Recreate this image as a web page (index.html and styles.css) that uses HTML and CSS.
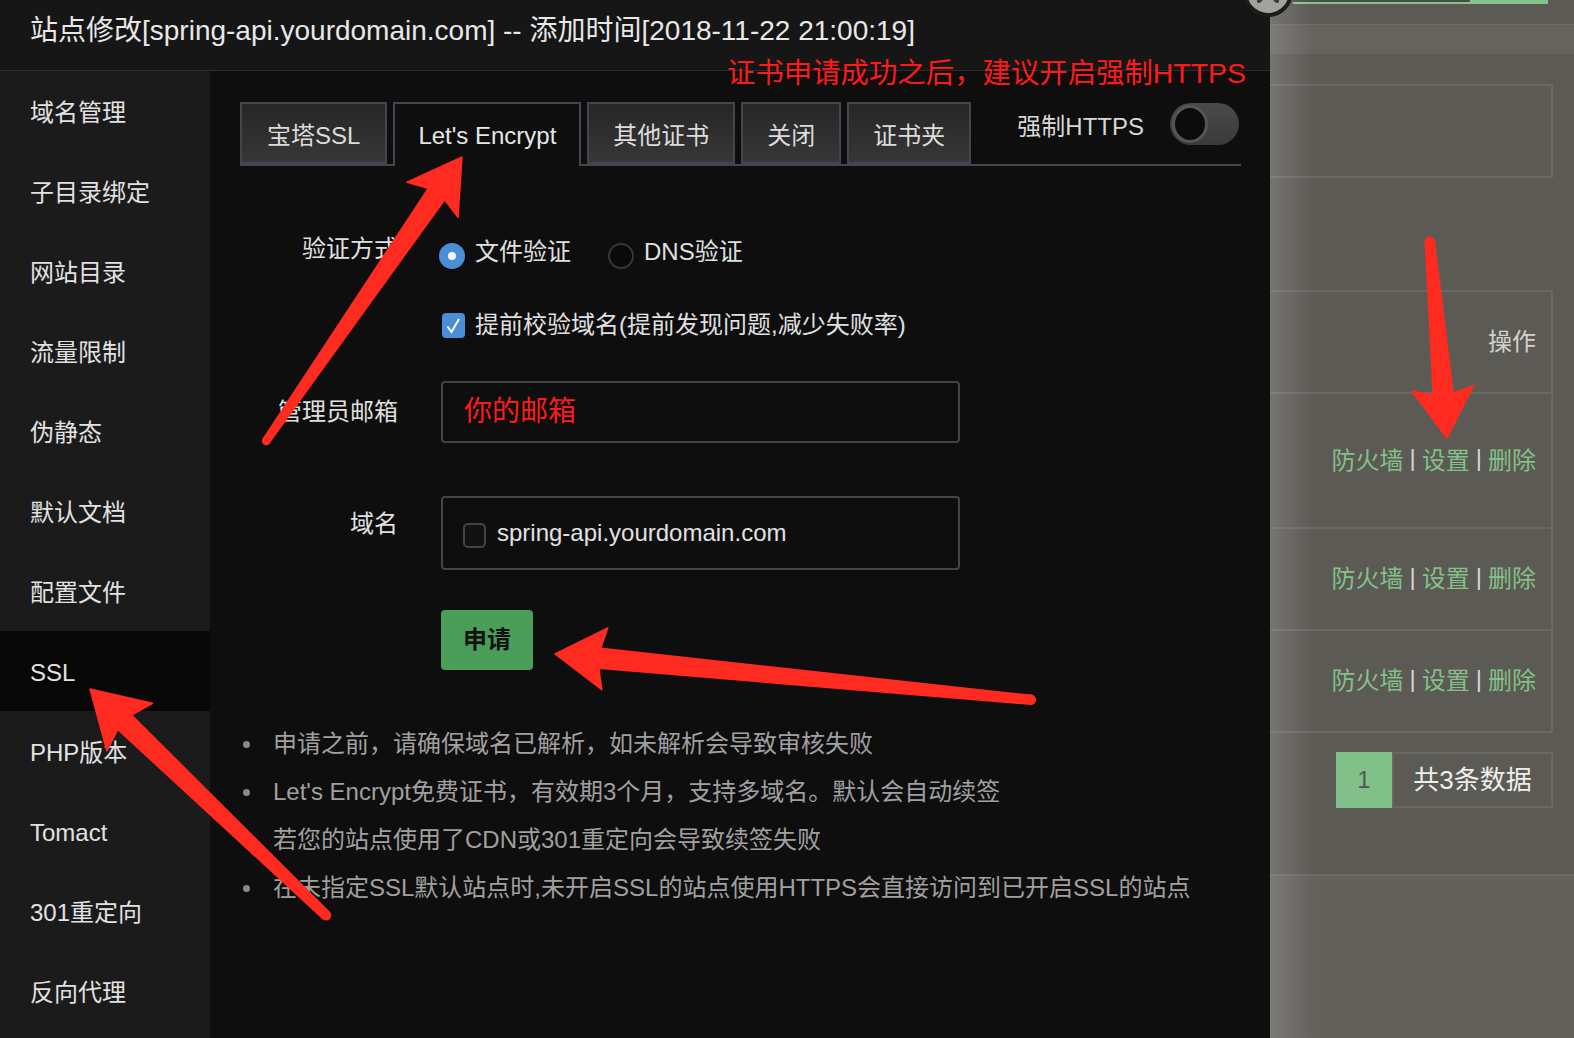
FILE: index.html
```html
<!DOCTYPE html>
<html lang="zh-CN">
<head>
<meta charset="utf-8">
<title>站点修改</title>
<link rel="stylesheet" href="styles.css">
</head>
<body>
<div class="page">
  <div class="modal">
    <div class="modal-title">站点修改[spring-api.yourdomain.com] -- 添加时间[2018-11-22 21:00:19]</div>
    <div class="modal-body">
      <ul class="side">
        <li>域名管理</li>
        <li>子目录绑定</li>
        <li>网站目录</li>
        <li>流量限制</li>
        <li>伪静态</li>
        <li>默认文档</li>
        <li>配置文件</li>
        <li class="active">SSL</li>
        <li>PHP版本</li>
        <li>Tomact</li>
        <li>301重定向</li>
        <li>反向代理</li>
      </ul>
      <div class="main">
        <div class="tabbar">
          <div class="tabs">
            <div class="tab">宝塔SSL</div>
            <div class="tab active">Let's Encrypt</div>
            <div class="tab">其他证书</div>
            <div class="tab">关闭</div>
            <div class="tab">证书夹</div>
          </div>
          <div class="force">
            <span>强制HTTPS</span>
            <span class="switch"><span class="knob"></span></span>
          </div>
        </div>

        <div class="row row-verify">
          <div class="label">验证方式</div>
          <div class="ctrl">
            <span class="radio on"><span class="dot"></span>文件验证</span>
            <span class="radio"><span class="dot"></span>DNS验证</span>
          </div>
        </div>

        <div class="row row-check">
          <div class="label"></div>
          <div class="ctrl">
            <span class="check on"><svg viewBox="0 0 23 25" width="23" height="25"><path d="M5.5 13.5 L9.5 19 L17 6" fill="none" stroke="#fff" stroke-width="2"/></svg></span>
            <span class="check-text">提前校验域名(提前发现问题,减少失败率)</span>
          </div>
        </div>

        <div class="row row-email">
          <div class="label">管理员邮箱</div>
          <div class="input email">你的邮箱</div>
        </div>

        <div class="row row-domain">
          <div class="label">域名</div>
          <div class="input domain"><span class="check off"></span><span class="domain-text">spring-api.yourdomain.com</span></div>
        </div>

        <div class="row row-btn">
          <div class="label"></div>
          <div class="btn">申请</div>
        </div>

        <ul class="tips">
          <li>申请之前，请确保域名已解析，如未解析会导致审核失败</li>
          <li>Let's Encrypt免费证书，有效期3个月，支持多域名。默认会自动续签</li>
          <li class="nobullet">若您的站点使用了CDN或301重定向会导致续签失败</li>
          <li>在未指定SSL默认站点时,未开启SSL的站点使用HTTPS会直接访问到已开启SSL的站点</li>
        </ul>
      </div>
    </div>
  </div>

  <div class="bg">
    <div class="topstrip"><div class="progress"><div class="progress-dark"></div></div></div>
    <div class="band"></div>
    <div class="box"></div>
    <div class="table">
      <div class="tr th">操作</div>
      <div class="tr tall"><span class="lk">防火墙</span><span class="sep">|</span><span class="lk">设置</span><span class="sep">|</span><span class="lk">删除</span></div>
      <div class="tr"><span class="lk">防火墙</span><span class="sep">|</span><span class="lk">设置</span><span class="sep">|</span><span class="lk">删除</span></div>
      <div class="tr"><span class="lk">防火墙</span><span class="sep">|</span><span class="lk">设置</span><span class="sep">|</span><span class="lk">删除</span></div>
    </div>
    <div class="pager"><span class="num">1</span><span class="total">共3条数据</span></div>
    <div class="foot"></div>
  </div>
</div>

<div class="close"><svg width="42" height="42" viewBox="0 0 42 42"><path d="M12 12 L30 30 M30 12 L12 30" stroke="#3a3a3a" stroke-width="4" stroke-linecap="round"/></svg></div>
<div class="note">证书申请成功之后，建议开启强制HTTPS</div>

<svg class="arrows" width="1574" height="1038" viewBox="0 0 1574 1038">
  <g fill="#ff2a20" stroke="#ff2a20" stroke-width="1.5" stroke-linejoin="round">
    <g transform="translate(462 157) rotate(-55.4)">
      <polygon points="0,0 -52,-31 -45,-10 -345,-3.5 -345,3.5 -45,10 -52,31"/>
      <circle cx="-345" cy="0" r="3.5"/>
    </g>
    <g transform="translate(1447 438) rotate(85)">
      <polygon points="0,0 -50,-31 -44,-10 -197,-4.5 -197,4.5 -44,10 -50,31"/>
      <circle cx="-197" cy="0" r="4.5"/>
    </g>
    <g transform="translate(555 654) rotate(185.5)">
      <polygon points="0,0 -50,-31 -45,-10 -478,-4.5 -478,4.5 -45,10 -50,31"/>
      <circle cx="-478" cy="0" r="4.5"/>
    </g>
    <g transform="translate(90 689) rotate(-136.2)">
      <polygon points="0,0 -55,-33 -48,-10 -327,-4.5 -327,4.5 -48,10 -55,33"/>
      <circle cx="-327" cy="0" r="4.5"/>
    </g>
  </g>
</svg>
</body>
</html>
```

FILE: styles.css
```css
* { box-sizing: border-box; }

html, body {
  margin: 0;
  padding: 0;
}

body {
  width: 1574px;
  height: 1038px;
  overflow: hidden;
  position: relative;
  background: #0e0e0e;
  font-family: "Liberation Sans", "Noto Sans CJK SC", sans-serif;
  color: #e0e0e0;
}

.page {
  display: flex;
  height: 1038px;
}

/* ---------- modal ---------- */
.modal {
  width: 1270px;
  flex: none;
  display: flex;
  flex-direction: column;
  background: #0e0e0e;
}

.modal-title {
  height: 71px;
  flex: none;
  padding-left: 30px;
  line-height: 62px;
  font-size: 28px;
  color: #e8e8e8;
  background: #161616;
  border-bottom: 1px solid #2b2b2b;
  white-space: nowrap;
}

.modal-body {
  flex: 1;
  display: flex;
}

.side {
  width: 210px;
  flex: none;
  margin: 0;
  padding: 0;
  list-style: none;
  background: #1b1b1b;
}

.side li {
  height: 80px;
  line-height: 83px;
  padding-left: 30px;
  font-size: 24px;
  color: #e2e2e2;
}

.side li.active {
  background: #080808;
}

.main {
  flex: 1;
  padding: 31px 29px 0 30px;
}

/* ---------- tabs ---------- */
.tabbar {
  height: 64px;
  display: flex;
  justify-content: space-between;
  border-bottom: 2px solid #45454f;
}

.tabs {
  display: flex;
  gap: 6px;
  align-items: flex-start;
}

.tab {
  height: 62px;
  padding: 0 24px;
  border: 2px solid #45454f;
  background: linear-gradient(#262626, #373737);
  font-size: 24px;
  line-height: 63px;
  color: #dcdcdc;
  white-space: nowrap;
}

.tab:first-child { padding: 0 25px; }

.tab.active {
  height: 64px;
  border-bottom: none;
  background: #0e0e0e;
  padding: 0 23px;
  color: #e6e6e6;
}

.force {
  display: flex;
  align-items: center;
  gap: 26px;
  height: 42px;
  margin-top: 1px;
  margin-right: 2px;
  font-size: 24px;
  color: #d8d8d8;
}

.switch {
  width: 69px;
  height: 42px;
  border-radius: 21px;
  background: linear-gradient(#4a4a4a, #3a3a3a);
  display: flex;
  align-items: center;
  padding-left: 2px;
}

.knob {
  width: 36px;
  height: 38px;
  border-radius: 50%;
  background: #0c0c0c;
  border: 3px solid #555;
}

/* ---------- form ---------- */
.row {
  display: flex;
  align-items: center;
}

.label {
  width: 158px;
  flex: none;
  margin-right: 43px;
  text-align: right;
  font-size: 24px;
  line-height: 40px;
  color: #e0e0e0;
  white-space: nowrap;
}

.ctrl {
  display: flex;
  align-items: center;
  font-size: 24px;
  color: #e0e0e0;
}

.row-verify {
  margin-top: 63px;
  height: 40px;
}

.row-verify .label { margin-right: 41px; }

.radio {
  display: inline-flex;
  align-items: center;
  gap: 10px;
  margin-right: 37px;
  white-space: nowrap;
}

.radio .dot {
  width: 26px;
  height: 26px;
  border-radius: 50%;
  margin-top: 13px;
  background: #0a0a0a;
  border: 2px solid #363636;
  display: flex;
  align-items: center;
  justify-content: center;
}

.radio.on .dot {
  background: #4a8ed6;
  border-color: #4a8ed6;
}

.radio.on .dot::after {
  content: "";
  width: 8px;
  height: 8px;
  border-radius: 50%;
  background: #f4f4f4;
}

.row-check {
  margin-top: 33px;
  height: 40px;
}

.check {
  width: 23px;
  height: 25px;
  border-radius: 4px;
  flex: none;
}

.check.on {
  background: #4a8ed6;
  margin-left: 1px;
  margin-top: 6px;
}

.check svg { display: block; }

.check-text {
  margin-left: 10px;
  white-space: nowrap;
}

.row-email {
  margin-top: 39px;
}

.input {
  width: 519px;
  border: 2px solid #444;
  border-radius: 4px;
  background: #0e0e0e;
}

.email {
  height: 62px;
  padding-left: 21px;
  line-height: 58px;
  font-size: 28px;
  color: #ff1a1a;
}

.row-domain {
  margin-top: 53px;
  align-items: flex-start;
}

.row-domain .label {
  margin-top: 8px;
}

.domain {
  height: 74px;
  display: flex;
  align-items: center;
  padding-left: 20px;
}

.check.off {
  background: #121212;
  border: 2px solid #444;
  border-radius: 5px;
  margin-top: 5px;
}

.domain-text {
  margin-left: 11px;
  font-size: 24px;
  color: #e2e2e2;
  white-space: nowrap;
}

.row-btn {
  margin-top: 40px;
}

.btn {
  width: 92px;
  height: 60px;
  border-radius: 4px;
  background: #4a9e59;
  color: #111;
  font-size: 24px;
  font-weight: bold;
  text-align: center;
  line-height: 60px;
}

/* ---------- tips ---------- */
.tips {
  list-style: none;
  margin: 50px 0 0 0;
  padding: 0;
}

.tips li {
  position: relative;
  padding-left: 33px;
  height: 48px;
  line-height: 48px;
  font-size: 24px;
  color: #a0a0a0;
  white-space: nowrap;
}

.tips li::before {
  content: "";
  position: absolute;
  left: 3px;
  top: 21px;
  width: 7px;
  height: 7px;
  border-radius: 50%;
  background: #8a8a8a;
}

.tips li.nobullet::before { display: none; }

/* ---------- background page ---------- */
.bg {
  flex: 1;
  position: relative;
  display: flex;
  flex-direction: column;
  background: #5c5a55;
}

.bg::before {
  content: "";
  position: absolute;
  left: 0;
  top: 0;
  bottom: 0;
  width: 45px;
  background: linear-gradient(to right, rgba(255,255,255,0.16), rgba(255,255,255,0));
  pointer-events: none;
}

.topstrip {
  height: 24px;
  flex: none;
}

.progress {
  margin-left: 23px;
  width: 255px;
  height: 4px;
  background: #86c38a;
}

.progress-dark {
  width: 177px;
  height: 2px;
  background: #4c4b48;
}

.band {
  height: 30px;
  flex: none;
  background: #65635e;
  border-top: 1px solid #6e6c67;
}

.box {
  height: 94px;
  flex: none;
  margin-top: 30px;
  margin-right: 21px;
  border: 2px solid #6a6863;
  border-left: none;
}

.table {
  margin-top: 112px;
  margin-right: 21px;
  border-top: 2px solid #6a6863;
  border-right: 2px solid #6a6863;
}

.tr {
  height: 102px;
  display: flex;
  align-items: center;
  justify-content: flex-end;
  padding-right: 15px;
  padding-bottom: 5px;
  border-bottom: 2px solid #6a6863;
  font-size: 24px;
}

.tr.tall { height: 135px; }

.tr.th {
  color: #d2d0cc;
  height: 102px;
}

.lk { color: #84c188; }

.sep {
  color: #d8d6d2;
  margin: 0 6px;
}

.pager {
  margin-top: 19px;
  margin-right: 21px;
  display: flex;
  justify-content: flex-end;
  flex: none;
}

.num {
  width: 56px;
  height: 56px;
  background: #82c08a;
  color: #555;
  font-size: 24px;
  text-align: center;
  line-height: 56px;
}

.total {
  width: 161px;
  height: 56px;
  border: 2px solid #6a6863;
  font-size: 26px;
  color: #eeeeea;
  text-align: center;
  line-height: 52px;
}

.foot {
  margin-top: 66px;
  flex: 1;
  background: #63615c;
  border-top: 2px solid #6d6b66;
}

/* ---------- overlays ---------- */
.close {
  position: absolute;
  left: 1243px;
  top: -33px;
  width: 50px;
  height: 50px;
  border-radius: 50%;
  background: #a3a19c;
  border: 4px solid #1c1c1c;
}

.close svg { display: block; }

.note {
  position: absolute;
  left: 727px;
  top: 53px;
  font-size: 28.4px;
  line-height: 40px;
  color: #ff1a1a;
  white-space: nowrap;
}

.arrows {
  position: absolute;
  left: 0;
  top: 0;
  pointer-events: none;
}
```
